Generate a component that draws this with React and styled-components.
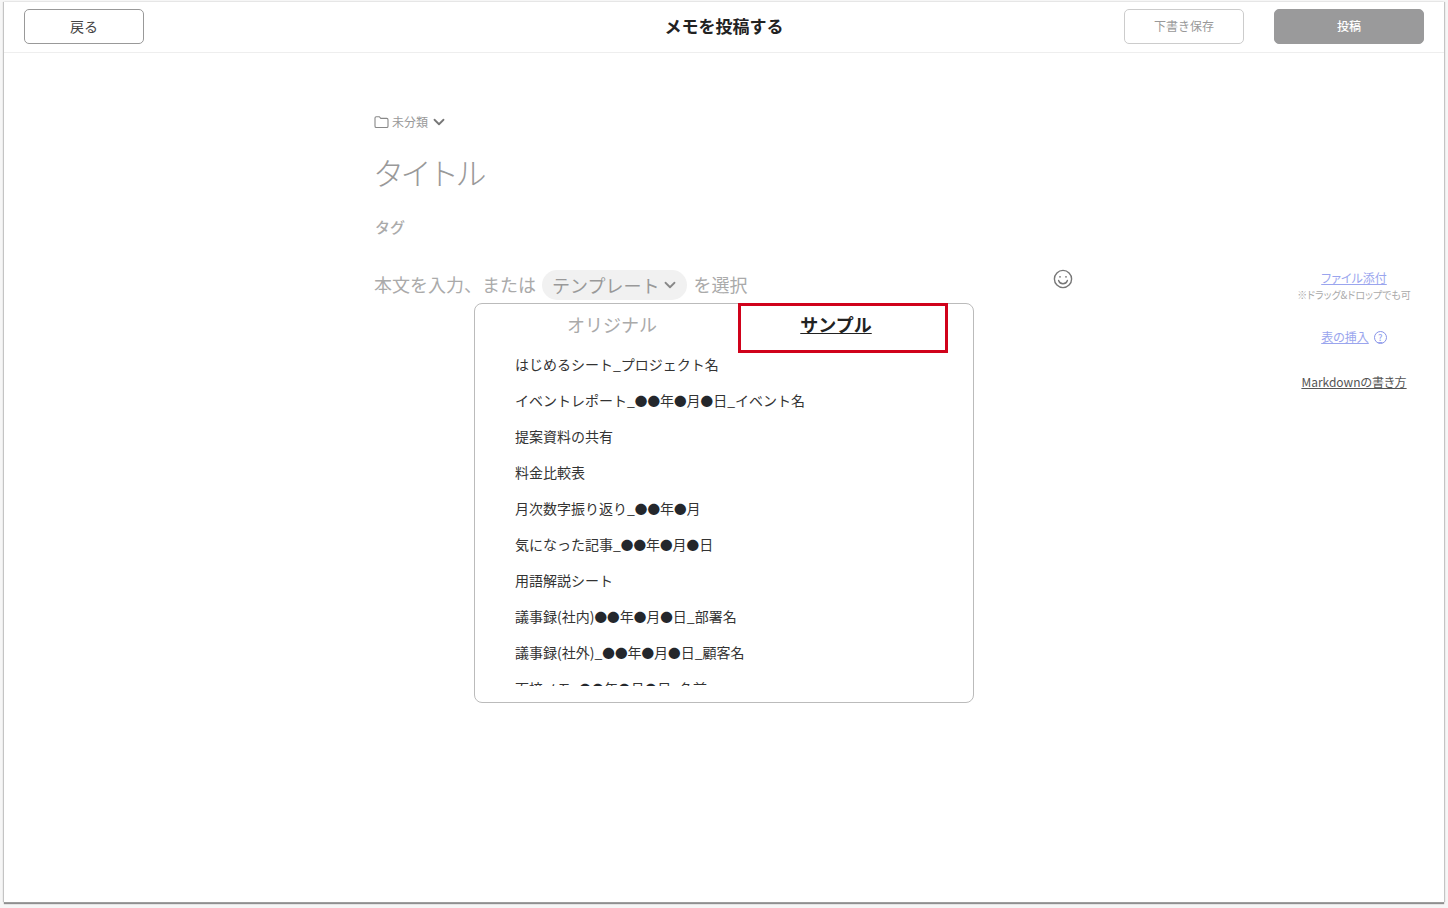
import styled, { createGlobalStyle } from 'styled-components';
import { ChevronDown } from 'lucide-react';

const GlobalStyle = createGlobalStyle`
  html {
    overflow: hidden;
  }
  body {
    box-sizing: border-box;
    margin: 0;
    min-height: 100vh;
    padding-top: 2px;
    background: #f6f6f6;
    font-family: "Noto Sans CJK JP", "Liberation Sans", sans-serif;
  }
`;

const templates = [
  'はじめるシート_プロジェクト名',
  'イベントレポート_●●年●月●日_イベント名',
  '提案資料の共有',
  '料金比較表',
  '月次数字振り返り_●●年●月',
  '気になった記事_●●年●月●日',
  '用語解説シート',
  '議事録(社内)●●年●月●日_部署名',
  '議事録(社外)_●●年●月●日_顧客名',
  '面接メモ_●●年●月●日_名前',
];

const Window = styled.div`
  width: 1440px;
  height: 900px;
  margin-left: 4px;
  background: #fff;
  box-shadow: -1px 0 1px #c4c4c4, 1px 0 1px #c4c4c4, 0 2px 1px #8f8f8f;
`;

const Header = styled.header`
  display: grid;
  grid-template-columns: 1fr auto 1fr;
  align-items: center;
  box-sizing: border-box;
  height: 51px;
  padding: 0 20px 1px;
  border-bottom: 1px solid #eee;
`;

const HeaderActions = styled.div`
  display: flex;
  justify-content: flex-end;
  gap: 30px;
`;

const Button = styled.button`
  width: ${({ $width }) => $width}px;
  height: 35px;
  padding: 0 0 2px;
  border-radius: 5px;
  border: 1px solid ${({ $muted }) => ($muted ? '#ccc' : '#999')};
  background: #fff;
  color: ${({ $muted }) => ($muted ? '#999' : '#444')};
  font: inherit;
  font-size: ${({ $muted }) => ($muted ? 12 : 14)}px;
`;

const PostButton = styled(Button)`
  border-color: #9a9a9b;
  background: #9a9a9b;
  color: #fff;
  font-size: 12px;
  font-weight: 500;
`;

const PageTitle = styled.h1`
  margin: 0 0 2px;
  font-size: 17px;
  font-weight: 700;
  line-height: 1;
  color: #222;
`;

const Content = styled.main`
  display: grid;
  grid-template-columns: 700px 146px;
  justify-content: space-between;
  padding: 0 17px 0 370px;
`;

const Editor = styled.section`
  padding-top: 60px;
`;

const Category = styled.div`
  display: flex;
  align-items: center;
  height: 18px;
  font-size: 12px;
  color: #999;
  svg { flex: none; }
`;

const CategoryText = styled.span`
  margin: 0 2px 0 3px;
  padding-bottom: 2px;
`;

const TitlePlaceholder = styled.div`
  margin: 18px 0 0 -1px;
  height: 46px;
  font-size: 31px;
  line-height: 46px;
  font-weight: 300;
  letter-spacing: -3.5px;
  color: #999;
`;

const TagPlaceholder = styled.div`
  margin-top: 21px;
  height: 22px;
  padding-left: 1px;
  font-size: 15px;
  line-height: 22px;
  font-weight: 500;
  color: #aaa;
`;

const BodyRow = styled.div`
  display: flex;
  align-items: center;
  justify-content: space-between;
  margin-top: 32px;
  height: 30px;
`;

const Prompt = styled.div`
  display: flex;
  align-items: center;
  gap: 6px;
  font-size: 18px;
  line-height: 28px;
  padding-bottom: 2px;
  color: #aaa;
  white-space: nowrap;
`;

const TemplatePill = styled.span`
  display: flex;
  align-items: center;
  gap: 2px;
  height: 30px;
  margin-bottom: -2px;
  padding: 0 8px 0 10px;
  border-radius: 15px;
  background: #f1f1f1;
  color: #999;
`;

const Smiley = styled.svg`
  width: 20px;
  height: 20px;
  margin: -12px 1px 0 0;
`;

const Popup = styled.div`
  position: relative;
  box-sizing: border-box;
  width: 500px;
  height: 400px;
  margin: 3px auto 0;
  padding: 0 25px 17px;
  border: 1px solid #bbb;
  border-radius: 8px;
  background: #fff;
`;

const Tabs = styled.div`
  display: grid;
  grid-template-columns: 1fr 1fr;
  box-sizing: border-box;
  height: 42px;
  padding-bottom: 3px;
`;

const Tab = styled.div`
  display: flex;
  align-items: center;
  justify-content: center;
  font-size: 18px;
  font-weight: ${({ $active }) => ($active ? 700 : 400)};
  color: ${({ $active }) => ($active ? '#222' : '#aaa')};
  text-decoration: ${({ $active }) => ($active ? 'underline' : 'none')};
`;

const Highlight = styled.div`
  position: absolute;
  top: -1px;
  left: 263px;
  box-sizing: border-box;
  width: 210px;
  height: 50px;
  border: 3px solid #d0021b;
  pointer-events: none;
`;

const TemplateList = styled.ul`
  list-style: none;
  height: 340px;
  margin: 0;
  padding: 0 0 0 15px;
  overflow: hidden;
`;

const TemplateItem = styled.li`
  height: 36px;
  font-size: 14px;
  line-height: 36px;
  color: #333;
  white-space: nowrap;
`;

const Dot = styled.span`
  font-size: 12.6px;
  color: #24272c;
`;

const Side = styled.aside`
  display: flex;
  flex-direction: column;
  align-items: center;
  padding-top: 216px;
`;

const LinkText = styled.a`
  display: inline-flex;
  align-items: center;
  gap: 5px;
  font-size: 12px;
  line-height: 18px;
  font-feature-settings: "palt";
  color: ${({ $dark }) => ($dark ? '#555' : '#9aa5ee')};
  text-decoration: underline;
  margin-top: ${({ $top }) => $top || 0}px;
`;

const Hint = styled.div`
  margin-top: 1px;
  font-size: 10px;
  line-height: 14px;
  font-feature-settings: "palt";
  color: #aaa;
  white-space: nowrap;
`;

const HelpIcon = styled.span`
  display: inline-flex;
  align-items: center;
  justify-content: center;
  box-sizing: border-box;
  width: 13px;
  height: 13px;
  border: 1.2px solid #8793e8;
  border-radius: 50%;
  font-size: 9px;
  font-weight: 500;
  line-height: 1;
`;

const FolderIcon = () => (
  <svg width="15" height="14" viewBox="0 0 15 14" fill="none" stroke="#888" strokeWidth="1.1">
    <path d="M1 3c0-.8.5-1.3 1.3-1.3h3L6.8 3.4h5.9c.8 0 1.3.5 1.3 1.3v6.5c0 .8-.5 1.3-1.3 1.3H2.3c-.8 0-1.3-.5-1.3-1.3z" />
  </svg>
);

// the circles in the names run narrower than the other full-width glyphs
const withDots = (name) =>
  name.split(/(●+)/).map((part, i) => (part.startsWith('●') ? <Dot key={i}>{part}</Dot> : part));

const App = () => (
  <>
    <GlobalStyle />
    <Window>
      <Header>
        <div>
          <Button $width={120}>戻る</Button>
        </div>
        <PageTitle>メモを投稿する</PageTitle>
        <HeaderActions>
          <Button $width={120} $muted>下書き保存</Button>
          <PostButton $width={150}>投稿</PostButton>
        </HeaderActions>
      </Header>
      <Content>
        <Editor>
          <Category>
            <FolderIcon />
            <CategoryText>未分類</CategoryText>
            <ChevronDown size={18} color="#777" strokeWidth={2.4} />
          </Category>
          <TitlePlaceholder>タイトル</TitlePlaceholder>
          <TagPlaceholder>タグ</TagPlaceholder>
          <BodyRow>
            <Prompt>
              本文を入力、または
              <TemplatePill>
                テンプレート
                <ChevronDown size={18} color="#888" strokeWidth={2.4} />
              </TemplatePill>
              を選択
            </Prompt>
            <Smiley viewBox="0 0 20 20" fill="none" stroke="#777" strokeWidth="1.4">
              <circle cx="10" cy="10" r="8.6" />
              <circle cx="7" cy="7.8" r="0.9" fill="#777" stroke="none" />
              <circle cx="13" cy="7.8" r="0.9" fill="#777" stroke="none" />
              <path d="M5.6 11.4c.8 2.2 2.4 3.4 4.4 3.4s3.6-1.2 4.4-3.4" strokeLinecap="round" />
            </Smiley>
          </BodyRow>
          <Popup>
            <Tabs>
              <Tab>オリジナル</Tab>
              <Tab $active>サンプル</Tab>
            </Tabs>
            <Highlight />
            <TemplateList>
              {templates.map((name) => (
                <TemplateItem key={name}>{withDots(name)}</TemplateItem>
              ))}
            </TemplateList>
          </Popup>
        </Editor>
        <Side>
          <LinkText>ファイル添付</LinkText>
          <Hint>※ドラッグ&ドロップでも可</Hint>
          <LinkText $top={26}>
            表の挿入
            <HelpIcon>?</HelpIcon>
          </LinkText>
          <LinkText $top={27} $dark>Markdownの書き方</LinkText>
        </Side>
      </Content>
    </Window>
  </>
);

export default App;
